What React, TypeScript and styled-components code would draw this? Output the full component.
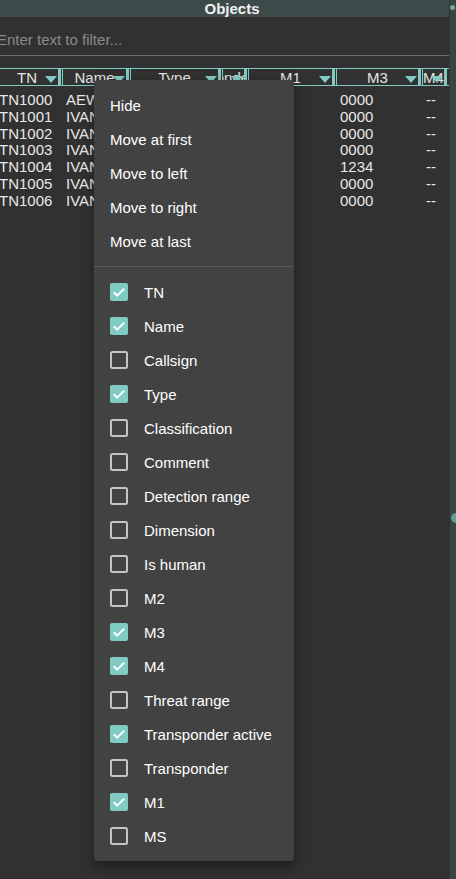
import React from 'react'
import styled, { createGlobalStyle } from 'styled-components'

const teal = '#80cbc4'
const font = '"Liberation Sans", Arial, sans-serif'

interface Column {
  key: string
  title: string
  width: number
}

const columns: Column[] = [
  { key: 'tn', title: 'TN', width: 67 },
  { key: 'name', title: 'Name', width: 68 },
  { key: 'type', title: 'Type', width: 92 },
  { key: 'tra', title: 'Transponder active', width: 26 },
  { key: 'm1', title: 'M1', width: 88 },
  { key: 'm3', title: 'M3', width: 86 },
  { key: 'm4', title: 'M4', width: 26 },
]

const rows = [
  { tn: 'TN1000', name: 'AEW 1', type: 'AEW', tra: 'Yes', m1: '--', m3: '0000', m4: '--' },
  { tn: 'TN1001', name: 'IVAN 1', type: 'Fighter', tra: 'Yes', m1: '--', m3: '0000', m4: '--' },
  { tn: 'TN1002', name: 'IVAN 2', type: 'Fighter', tra: 'Yes', m1: '--', m3: '0000', m4: '--' },
  { tn: 'TN1003', name: 'IVAN 3', type: 'Fighter', tra: 'Yes', m1: '--', m3: '0000', m4: '--' },
  { tn: 'TN1004', name: 'IVAN 4', type: 'Fighter', tra: 'Yes', m1: '--', m3: '1234', m4: '--' },
  { tn: 'TN1005', name: 'IVAN 5', type: 'Fighter', tra: 'Yes', m1: '--', m3: '0000', m4: '--' },
  { tn: 'TN1006', name: 'IVAN 6', type: 'Fighter', tra: 'Yes', m1: '--', m3: '0000', m4: '--' },
]

const actions = ['Hide', 'Move at first', 'Move to left', 'Move to right', 'Move at last']

const fields: [string, boolean][] = [
  ['TN', true],
  ['Name', true],
  ['Callsign', false],
  ['Type', true],
  ['Classification', false],
  ['Comment', false],
  ['Detection range', false],
  ['Dimension', false],
  ['Is human', false],
  ['M2', false],
  ['M3', true],
  ['M4', true],
  ['Threat range', false],
  ['Transponder active', true],
  ['Transponder', false],
  ['M1', true],
  ['MS', false],
]

function Check({ checked }: { checked: boolean }) {
  return (
    <svg width="18" height="18" viewBox="0 0 18 18">
      {checked ? (
        <>
          <rect x="0" y="0" width="18" height="18" rx="2" fill={teal} />
          <polyline
            points="3.8,9.2 7.2,12.6 14.2,5.6"
            fill="none"
            stroke="#fff"
            strokeWidth="2"
          />
        </>
      ) : (
        <rect x="1" y="1" width="16" height="16" rx="1.5" fill="none" stroke="#c4c4c4" strokeWidth="2" />
      )}
    </svg>
  )
}

export default function App() {
  return (
    <>
      <Global />
      <S.Root>
        <S.Panel>
          <S.TitleBar>Objects</S.TitleBar>
          <S.Body>
            <S.Scroller>
              <S.Filter placeholder="Enter text to filter..." />
              <S.HeaderRow>
                {columns.map(c => (
                  <S.HeaderCell key={c.key} $width={c.width}>
                    <span>{c.title}</span>
                    <S.SortIcon width="12" height="7" viewBox="0 0 12 7">
                      <polygon points="0,0 12,0 6,7" fill={teal} />
                    </S.SortIcon>
                  </S.HeaderCell>
                ))}
              </S.HeaderRow>
              <S.Rows>
                {rows.map(r => (
                  <S.Row key={r.tn}>
                    {columns.map(c => (
                      <S.Cell key={c.key} $width={c.width}>
                        {r[c.key as keyof typeof r]}
                      </S.Cell>
                    ))}
                  </S.Row>
                ))}
              </S.Rows>
            </S.Scroller>
          </S.Body>
        </S.Panel>
        <S.Strip>
          <S.Dot />
          <S.Grip />
        </S.Strip>

        <S.Menu>
          {actions.map(a => (
            <S.Item key={a}>{a}</S.Item>
          ))}
          <S.Divider />
          {fields.map(([label, on]) => (
            <S.Item key={label}>
              <Check checked={on} />
              {label}
            </S.Item>
          ))}
        </S.Menu>
      </S.Root>
    </>
  )
}

const Global = createGlobalStyle`
  body {
    margin: 0;
    background: #313131;
    font-family: ${font};
  }
`

const S = {
  Root: styled.div`
    position: relative;
    display: flex;
    width: 456px;
    height: 879px;
    overflow: hidden;
    background: #313131;
    font-family: ${font};
  `,

  Panel: styled.div`
    flex: 1;
    display: flex;
    flex-direction: column;
    min-width: 0;
  `,

  TitleBar: styled.div`
    height: 17px;
    line-height: 17px;
    padding-left: 15px;
    background: #3c4a4a;
    color: #f0f0f0;
    font-size: 15px;
    font-weight: bold;
    text-align: center;
  `,

  Body: styled.div`
    flex: 1;
    overflow: hidden;
  `,

  Scroller: styled.div`
    width: calc(100% + 5px);
    margin-left: -5px;
  `,

  Filter: styled.input`
    display: block;
    box-sizing: border-box;
    width: 100%;
    height: 39px;
    padding: 7px 2px 0;
    border: none;
    border-bottom: 1px solid #6c6c6c;
    background: transparent;
    color: #ddd;
    font-family: ${font};
    font-size: 15px;

    &::placeholder {
      color: #8a8a8a;
    }

    &:focus {
      outline: none;
    }
  `,

  HeaderRow: styled.div`
    display: flex;
    height: 16px;
    margin-top: 12px;
    border-top: 1px solid ${teal};
    border-bottom: 1px solid ${teal};
  `,

  HeaderCell: styled.div<{ $width: number }>`
    position: relative;
    flex: 0 0 ${p => p.$width - 1}px;
    box-sizing: border-box;
    display: flex;
    justify-content: center;
    align-items: center;
    margin-right: 1px;
    overflow: hidden;
    border-left: 1px solid ${teal};
    border-right: 3px solid ${teal};
    color: #e4e4e4;
    font-size: 15px;
    white-space: nowrap;

    span {
      flex-shrink: 0;
    }
  `,

  SortIcon: styled.svg`
    position: absolute;
    right: 1px;
    bottom: 2px;
  `,

  Rows: styled.div`
    padding-top: 6px;
  `,

  Row: styled.div`
    display: flex;
    height: 16.8px;
    line-height: 16.8px;
  `,

  Cell: styled.div<{ $width: number }>`
    flex: 0 0 ${p => p.$width}px;
    box-sizing: border-box;
    padding-left: 4px;
    overflow: hidden;
    color: #e8e8e8;
    font-size: 15px;
    white-space: nowrap;
  `,

  Strip: styled.div`
    position: relative;
    flex: 0 0 6px;
    overflow: hidden;
    background: #394444;
    border-left: 1px solid #2c3333;
  `,

  Dot: styled.div`
    position: absolute;
    top: 5px;
    left: 0;
    width: 5px;
    height: 5px;
    border-radius: 50%;
    background: #7da6a2;
  `,

  Grip: styled.div`
    position: absolute;
    top: 513px;
    left: 1px;
    width: 10px;
    height: 10px;
    border-radius: 50%;
    background: #5f9e97;
  `,

  Menu: styled.div`
    position: absolute;
    top: 80px;
    left: 94px;
    width: 200px;
    padding: 8px 0;
    border-radius: 4px;
    background: #424242;
    box-shadow: 0 5px 5px -3px rgba(0, 0, 0, 0.2),
      0 8px 10px 1px rgba(0, 0, 0, 0.14), 0 3px 14px 2px rgba(0, 0, 0, 0.12);
  `,

  Item: styled.div`
    display: flex;
    align-items: center;
    gap: 16px;
    height: 34px;
    padding: 0 16px;
    color: #fff;
    font-size: 15px;
    cursor: pointer;

    &:hover {
      background: rgba(255, 255, 255, 0.08);
    }
  `,

  Divider: styled.div`
    margin: 8px 0;
    border-top: 1px solid rgba(255, 255, 255, 0.12);
  `,
}
